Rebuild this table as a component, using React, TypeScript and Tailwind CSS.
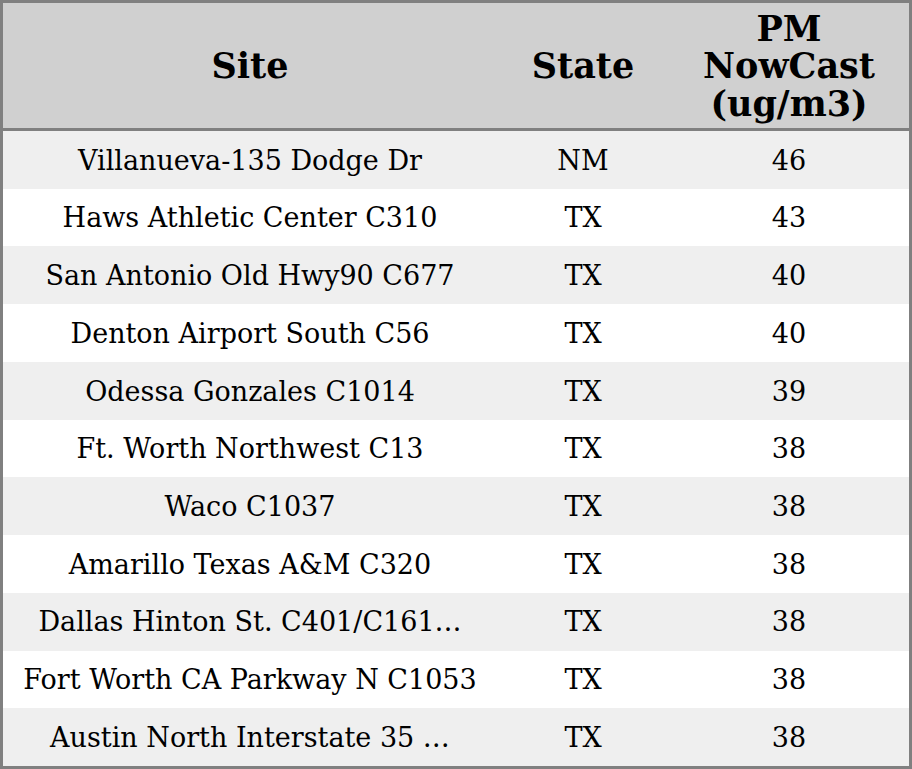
const rows: [string, string, string][] = [
  ["Villanueva-135 Dodge Dr", "NM", "46"],
  ["Haws Athletic Center C310", "TX", "43"],
  ["San Antonio Old Hwy90 C677", "TX", "40"],
  ["Denton Airport South C56", "TX", "40"],
  ["Odessa Gonzales C1014", "TX", "39"],
  ["Ft. Worth Northwest C13", "TX", "38"],
  ["Waco C1037", "TX", "38"],
  ["Amarillo Texas A&M C320", "TX", "38"],
  ["Dallas Hinton St. C401/C161…", "TX", "38"],
  ["Fort Worth CA Parkway N C1053", "TX", "38"],
  ["Austin North Interstate 35 …", "TX", "38"],
];

export default function App() {
  return (
    <div
      className="w-[912px] h-[769px] bg-white text-black"
      style={{ fontFamily: '"DejaVu Serif", "Liberation Serif", serif' }}
    >
      <div className="flex flex-col h-full border-[3px] border-[#808080]">
        {/* header */}
        <div className="flex h-[128px] shrink-0 bg-[#d0d0d0] border-b-[3px] border-[#808080] text-[35px] font-bold leading-[37.5px] pt-[1px]">
          <div className="w-[494px] flex items-center justify-center">Site</div>
          <div className="w-[172px] flex items-center justify-center">State</div>
          <div className="flex-1 flex items-center justify-center text-center">
            PM
            <br />
            NowCast
            <br />
            (ug/m3)
          </div>
        </div>
        <div className="flex-1 flex flex-col text-[27px]">
          {rows.map(([site, state, pm], i) => (
            <div
              key={i}
              className={`flex-1 flex items-center pt-[2px] ${i % 2 === 0 ? "bg-[#efefef]" : "bg-white"}`}
            >
              <div className="w-[494px] text-center whitespace-nowrap">{site}</div>
              <div className="w-[172px] text-center">{state}</div>
              <div className="flex-1 text-center">{pm}</div>
            </div>
          ))}
        </div>
      </div>
    </div>
  );
}
